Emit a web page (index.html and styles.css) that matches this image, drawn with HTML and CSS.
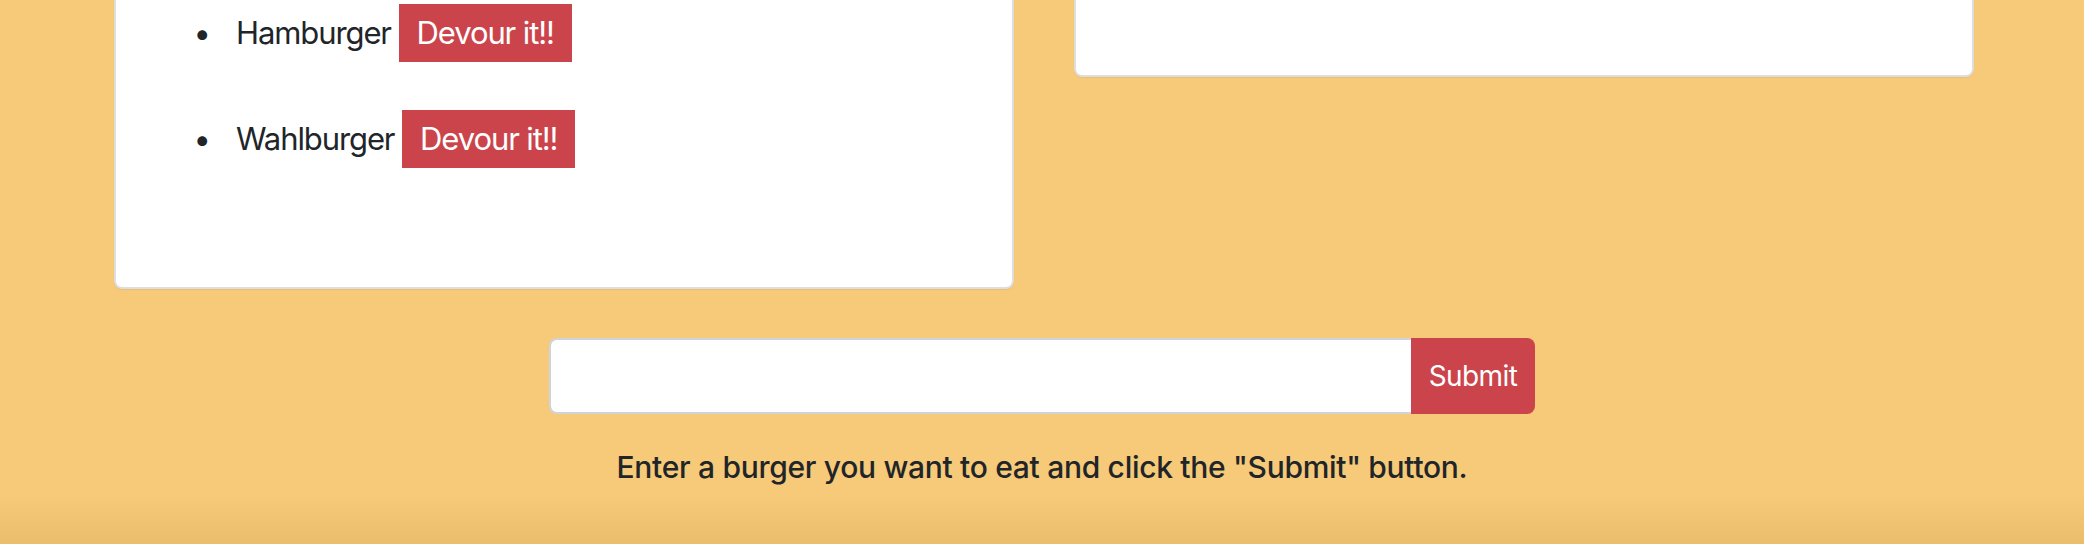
FILE: index.html
```html
<!DOCTYPE html>
<html lang="en">
<head>
<meta charset="utf-8">
<title>Eat-Da-Burger</title>
<link rel="stylesheet" href="styles.css">
</head>
<body>
<main class="page">
  <section class="row">
    <div class="card card-left">
      <ul class="burger-list">
        <li class="burger-item">Hamburger <button class="devour" type="button">Devour it!!</button></li>
        <li class="burger-item">Wahlburger <button class="devour" type="button">Devour it!!</button></li>
      </ul>
    </div>
    <div class="card card-right"></div>
  </section>
  <section class="add">
    <form class="input-group">
      <input class="burger-input" type="text" aria-label="Burger name">
      <button class="submit" type="button">Submit</button>
    </form>
    <p class="hint">Enter a burger you want to eat and click the "Submit" button.</p>
  </section>
</main>
</body>
</html>
```

FILE: styles.css
```css
html, body {
  margin: 0;
  padding: 0;
}

body {
  width: 2084px;
  height: 544px;
  overflow: hidden;
  font-family: Inter, "Noto Sans", "Liberation Sans", sans-serif;
  color: #212529;
  background: linear-gradient(to bottom, #f6ca78 0, #f6ca78 495px, #e9bd6b 544px);
}

.page {
  display: flex;
  flex-direction: column;
}

.row {
  display: flex;
  align-items: flex-start;
  gap: 60px;
  padding: 0 110px 0 114px;
}

.card {
  box-sizing: border-box;
  width: 900px;
  background: #fff;
  border: 2px solid #dedede;
  border-top: 0;
  border-radius: 0 0 8px 8px;
  box-shadow: 0 1px 1px rgba(0, 0, 0, 0.06);
}

.card-left {
  height: 289px;
  padding: 4px 40px 0 40px;
}

.card-right {
  height: 77px;
}

.burger-list {
  margin: 0;
  padding-left: 80px;
}

.burger-item {
  font-size: 31px;
  line-height: 48px;
  margin-bottom: 48px;
  letter-spacing: -1.1px;
}

.burger-item::marker {
  content: "\2022\00a0\00a0\00a0";
  font-size: 31px;
  letter-spacing: 0;
}

.devour {
  font-family: inherit;
  font-size: 31px;
  line-height: 48px;
  letter-spacing: -1.1px;
  color: #fff;
  background: #cb444b;
  border: 0;
  border-radius: 0;
  padding: 5px 18px;
  margin: 0;
}

.add {
  display: flex;
  flex-direction: column;
  align-items: center;
  margin-top: 49px;
}

.input-group {
  display: flex;
  width: 986px;
  height: 76px;
  margin: 0;
}

.burger-input {
  flex: 1;
  box-sizing: border-box;
  height: 76px;
  border: 2px solid #ced4da;
  border-right: 0;
  border-radius: 8px 0 0 8px;
  background: #fff;
  margin: 0;
  padding: 0 24px;
  font-family: inherit;
  font-size: 32px;
}

.submit {
  width: 124px;
  height: 76px;
  border: 0;
  border-radius: 0 8px 8px 0;
  background: #cb444b;
  color: #fff;
  font-family: inherit;
  font-size: 28px;
  letter-spacing: -0.6px;
  padding: 0;
  margin: 0;
}

.hint {
  margin: 34px 0 0 0;
  font-size: 30px;
  font-weight: 500;
  line-height: 38px;
  letter-spacing: -0.3px;
}
```
